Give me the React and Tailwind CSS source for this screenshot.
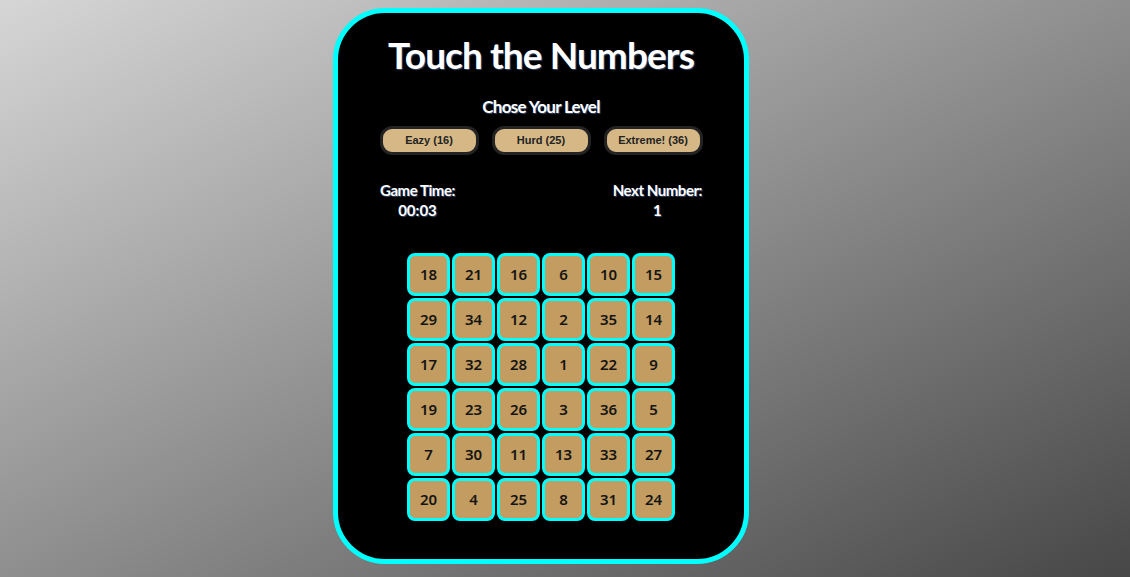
const grid = [
  [18, 21, 16, 6, 10, 15],
  [29, 34, 12, 2, 35, 14],
  [17, 32, 28, 1, 22, 9],
  [19, 23, 26, 3, 36, 5],
  [7, 30, 11, 13, 33, 27],
  [20, 4, 25, 8, 31, 24],
]

const levels = ['Eazy (16)', 'Hurd (25)', 'Extreme! (36)']

export default function App() {
  return (
    <div className="min-h-[577px] h-[577px] overflow-hidden bg-[linear-gradient(to_bottom_right,#d6d6d6,#474747)] pl-[333px] pt-[8px]">
      {/* ─── Card ─── */}
      <div className="w-[416px] h-[556px] bg-black border-[5px] border-[#00ffff] rounded-[52px] flex flex-col items-center font-['Lato',sans-serif] text-white">
        <h1 className="mt-[20px] h-[44px] text-[37px] leading-[44px] font-bold tracking-[-0.025em] [text-shadow:1px_1px_1px_#3a4a6a]">
          Touch the Numbers
        </h1>

        <p className="mt-[20px] text-[17px] leading-[20px] font-bold tracking-[-0.04em] [text-shadow:1px_1px_1px_#3a4a6a]">
          Chose Your Level
        </p>

        {/* Levels */}
        <div className="mt-[9px] flex gap-[13px]">
          {levels.map((l) => (
            <button
              key={l}
              className="w-[99px] h-[29px] rounded-[12px] border-[3px] border-[#232323] bg-[#d5b886] text-[11px] font-bold text-[#222] font-['Liberation_Sans',Arial,sans-serif]"
            >
              {l}
            </button>
          ))}
        </div>

        {/* Stats */}
        <div className="mt-[25px] w-[322px] flex justify-between text-[15px] leading-[20px] font-bold [text-shadow:1px_1px_1px_#3a4a6a]">
          <div className="flex flex-col items-center">
            <span className="tracking-[-0.03em]">Game Time:</span>
            <span>00:03</span>
          </div>
          <div className="flex flex-col items-center">
            <span className="tracking-[-0.03em]">Next Number:</span>
            <span>1</span>
          </div>
        </div>

        {/* Board */}
        <div className="mt-[33px] grid grid-cols-6 gap-[2px]">
          {grid.flat().map((n) => (
            <div
              key={n}
              className="w-[43px] h-[43px] rounded-[8px] border-[3px] border-[#00ffff] bg-[#c29c60] flex items-center justify-center text-[15px] font-semibold text-[#141414] font-['Noto_Sans',sans-serif]"
            >
              {n}
            </div>
          ))}
        </div>
      </div>
    </div>
  )
}
